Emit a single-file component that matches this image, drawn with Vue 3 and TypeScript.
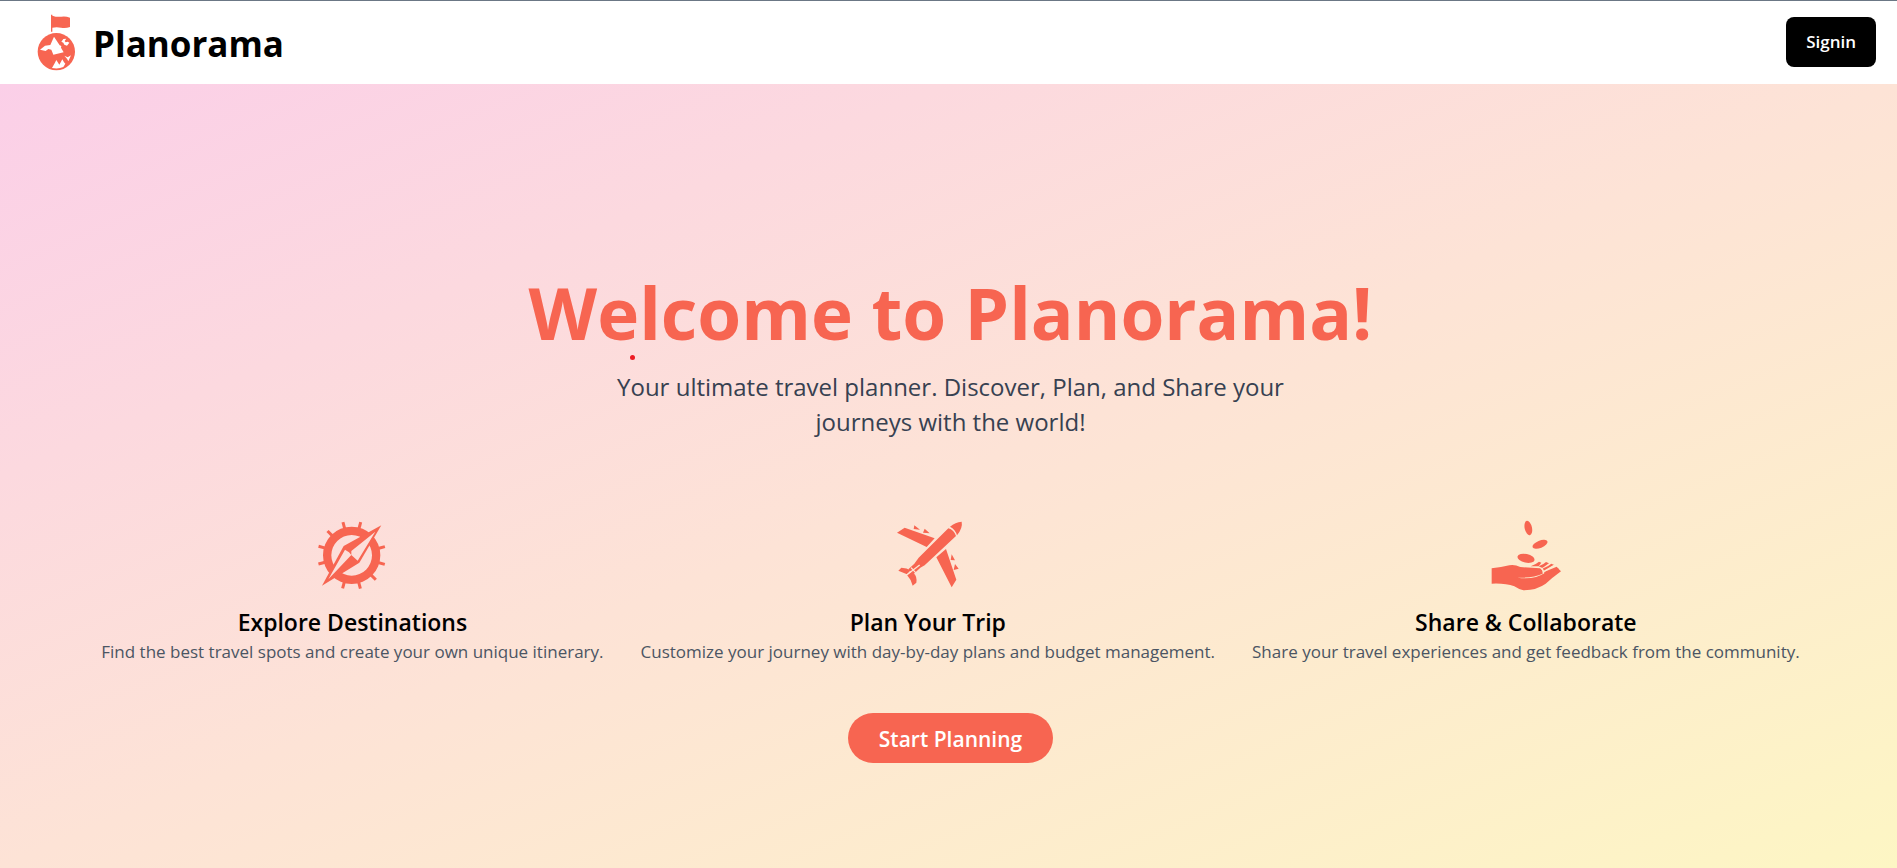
<script setup lang="ts">
interface Feature {
  icon: 'compass' | 'plane' | 'hand'
  title: string
  text: string
}

const features: Feature[] = [
  {
    icon: 'compass',
    title: 'Explore Destinations',
    text: 'Find the best travel spots and create your own unique itinerary.',
  },
  {
    icon: 'plane',
    title: 'Plan Your Trip',
    text: 'Customize your journey with day-by-day plans and budget management.',
  },
  {
    icon: 'hand',
    title: 'Share & Collaborate',
    text: 'Share your travel experiences and get feedback from the community.',
  },
]

// Rotation of each compass tick, in degrees clockwise from north
const ticks: number[] = [-75, -45, -15, 15, 75, 105, 135, 165, 195, 255]
</script>

<template>
  <div class="page">
    <header class="bar">
      <a class="brand" href="#">
        <svg class="logo" viewBox="3 21 180 180" aria-hidden="true">
          <path d="M78 29h4v3q14 5 27 3t26 3v28q-14 5-27 2t-26 0v12h-4z" />
          <circle cx="94" cy="140" r="56" />
          <path
            class="land"
            d="M45 134l15-12 16-2 11-25 17 26 5 2-1 5 8 14-31 7-6-15-9-2-8 6zM109 110l6-8 9-1-5 7 3 4 6-2 5 3-7 9-8-3-3-6zM81 189l8-14 5-10 9 14 9-16 5 9 4 4-6 10q-15 7-34 3zM118 152l10 5 10-6-8 18-4-8z"
          />
        </svg>
        <span class="name">Planorama</span>
      </a>
      <button class="signin" type="button">Signin</button>
    </header>

    <main class="hero">
      <span class="dot" aria-hidden="true"></span>
      <h1>Welcome to Planorama!</h1>
      <p class="lead">Your ultimate travel planner. Discover, Plan, and Share your journeys with the world!</p>

      <section class="features">
        <article v-for="feature in features" :key="feature.title" class="feature">
          <svg v-if="feature.icon === 'compass'" class="icon" viewBox="21 27 216 216" aria-hidden="true">
            <rect
              v-for="angle in ticks"
              :key="angle"
              x="124"
              y="33"
              width="9"
              height="24"
              :transform="`rotate(${angle} 128 136)`"
            />
            <path
              fill-rule="evenodd"
              d="M128 50a86 86 0 1 1 0 172a86 86 0 1 1 0-172zM128 75a61 61 0 1 0 0 122a61 61 0 1 0 0-122z"
            />
            <path d="M217 46L151 158 39 227 104 108z" />
            <path class="facet" d="M199 65L127 123 127 135 146 152zM108 119L120 127 127 135 58 208z" />
          </svg>
          <svg v-else-if="feature.icon === 'plane'" class="icon" viewBox="21 27 216 216" aria-hidden="true">
            <path d="M195 50Q211 36 230 35Q234 53 216 76Q211 58 195 50z" />
            <path d="M190 55Q207 60 213 78L119 166 106 173 86 192 70 178 88 161 101 143z" />
            <path d="M36 68L59 53 149 85 125 111zM183 117L214 209 200 232 154 142z" />
            <path d="M88 46L105 59 86 57zM119 56L134 70 114 68zM200 133L210 151 197 150zM210 162L221 176 206 180z" />
            <path d="M40 182L49 173Q66 173 77 181L66 193zM66 195L80 185 86 190Q97 200 94 218L83 227Q79 209 66 195z" />
            <path class="gap" d="M64 196L104 165M78 173L94 190" />
          </svg>
          <svg v-else class="icon" viewBox="30 27 216 216" aria-hidden="true">
            <ellipse cx="145" cy="54" rx="11" ry="22" transform="rotate(-12 145 54)" />
            <ellipse cx="180" cy="103" rx="24" ry="11" transform="rotate(-22 180 103)" />
            <ellipse cx="138" cy="145" rx="26" ry="13" transform="rotate(12 138 145)" />
            <path
              d="M35 175Q64 172 88 166Q104 163 121 171L180 175Q191 182 188 191Q158 204 112 203Q162 211 195 188L233 174 243 184Q216 204 197 221Q171 240 130 241Q118 239 103 229Q75 219 35 221z"
            />
            <path
              d="M152 169Q166 164 177 155L184 158 176 169zM176 169Q190 164 198 156L207 160 187 174zM187 176Q205 169 214 161L223 165 192 184zM192 186L230 170 237 178 195 191z"
            />
            <path class="crease" d="M185 174Q192 182 190 190M192 184L224 165" />
          </svg>
          <h2>{{ feature.title }}</h2>
          <p>{{ feature.text }}</p>
        </article>
      </section>

      <button class="start" type="button">Start Planning</button>
    </main>
  </div>
</template>

<style>
body {
  margin: 0;
}
</style>

<style scoped>
.page {
  display: flex;
  flex-direction: column;
  min-height: 100vh;
  font-family: 'Open Sans', 'Noto Sans', sans-serif;
  color: #000;
}

.bar {
  box-sizing: border-box;
  display: flex;
  align-items: center;
  justify-content: space-between;
  min-height: 84px;
  padding: 0 21px 1px 26px;
  border-top: 1px solid #6b7785;
  background: #fff;
}

.brand {
  display: flex;
  align-items: center;
  gap: 7px;
  color: inherit;
  text-decoration: none;
}

.logo {
  width: 60px;
  height: 60px;
  fill: #f76551;
}

.land {
  fill: #fff;
}

.name {
  padding-top: 4px;
  font-size: 35px;
  line-height: 40px;
  font-weight: 700;
}

button {
  border: 0;
  color: #fff;
  font-family: inherit;
  font-weight: 600;
  cursor: pointer;
}

.signin {
  padding: 13px 20px;
  border-radius: 8px;
  background: #000;
  font-size: 17px;
  line-height: 24px;
}

.hero {
  position: relative;
  box-sizing: border-box;
  flex: 1;
  display: flex;
  flex-direction: column;
  align-items: center;
  padding: 193px 24px 48px 28px;
  background: linear-gradient(to bottom right, #fbcfe8, #fde3d6 50%, #fdf6c4);
  text-align: center;
}

.dot {
  position: absolute;
  top: 271px;
  left: 33.2%;
  width: 5px;
  height: 5px;
  border-radius: 50%;
  background: #ed1c24;
}

h1,
h2,
p {
  margin: 0;
}

h1 {
  color: #f76551;
  font-size: 71px;
  line-height: 72px;
  font-weight: 700;
}

.lead {
  max-width: 672px;
  margin-top: 20px;
  color: #374151;
  font-size: 24px;
  line-height: 35px;
}

.features {
  display: flex;
  justify-content: center;
  gap: 37px;
  margin-top: 80px;
}

.feature {
  display: flex;
  flex-direction: column;
  align-items: center;
}

.icon {
  width: 72px;
  height: 72px;
  fill: #f76551;
}

.facet {
  fill: #fcdfda;
}

.gap,
.crease {
  fill: none;
  stroke: #fde5d4;
  stroke-width: 4;
}

.crease {
  stroke: #fdebcf;
}

h2 {
  margin-top: 15px;
  font-size: 23px;
  line-height: 32px;
  font-weight: 600;
}

.feature p {
  color: #4b5563;
  font-size: 17px;
  line-height: 28px;
}

.start {
  margin-top: 47px;
  padding: 10px 31px 8px;
  border-radius: 25px;
  background: #f76551;
  font-size: 21px;
  line-height: 32px;
}
</style>
